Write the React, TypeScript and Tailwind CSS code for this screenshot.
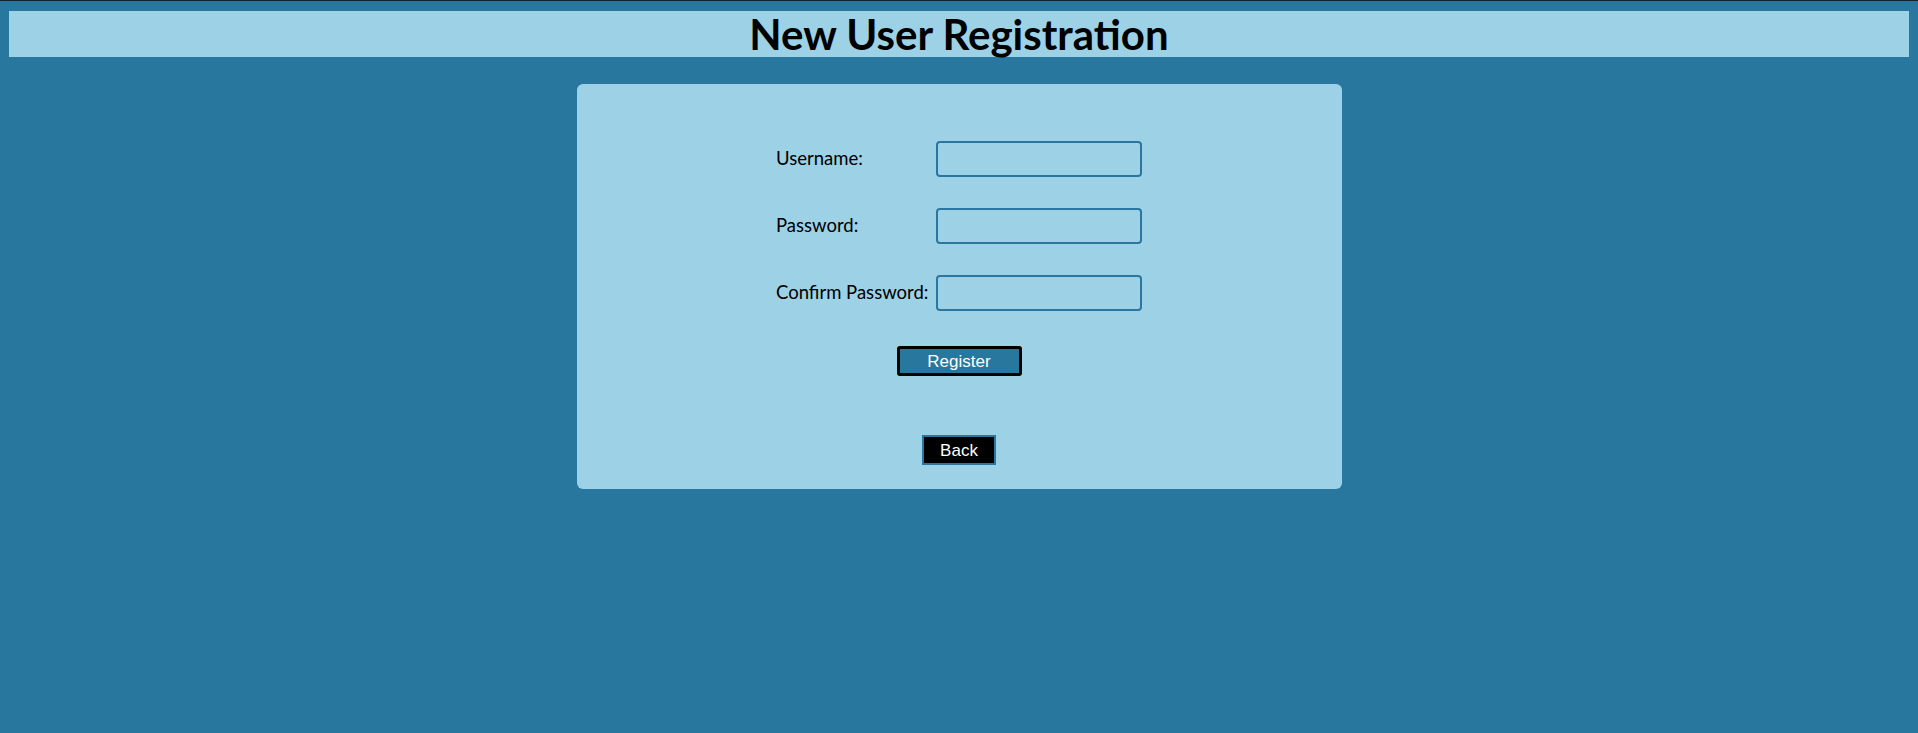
import { useState } from "react";

export default function App() {
  const [username, setUsername] = useState("");
  const [password, setPassword] = useState("");
  const [confirm, setConfirm] = useState("");

  const fields = [
    { label: "Username:", type: "text", value: username, set: setUsername },
    { label: "Password:", type: "password", value: password, set: setPassword },
    { label: "Confirm Password:", type: "password", value: confirm, set: setConfirm },
  ];

  return (
    <div className="min-h-screen bg-[#28779e] border-t border-[#142330] px-[9px] pt-[10px] font-['Lato',sans-serif]">
      <header className="h-[46px] bg-[#9dd1e6] flex items-center justify-center">
        <h1 className="text-[42px] font-bold text-black leading-none">New User Registration</h1>
      </header>

      <div className="mx-auto mt-[27px] w-[765px] h-[405px] rounded-md bg-[#9dd1e6] flex flex-col items-center pt-[57px]">
        <div className="flex flex-col gap-[31px]">
          {fields.map((f) => (
            <div key={f.label} className="flex items-center">
              <label className="w-[160px] text-[18.5px] text-black">{f.label}</label>
              <input
                type={f.type}
                value={f.value}
                onChange={(e) => f.set(e.target.value)}
                className="w-[206px] h-[36px] rounded-[4px] border-2 border-[#2a76a0] bg-transparent px-2 outline-none"
              />
            </div>
          ))}
        </div>

        <button className="mt-[35px] w-[125px] h-[30px] rounded-[3px] border-[3px] border-black bg-[#28779e] text-white text-[17px] font-['Liberation_Sans',sans-serif] leading-none">
          Register
        </button>

        <button className="mt-[59px] w-[74px] h-[30px] border-2 border-[#28779e] bg-black text-white text-[17px] font-['Liberation_Sans',sans-serif] leading-none">
          Back
        </button>
      </div>
    </div>
  );
}
